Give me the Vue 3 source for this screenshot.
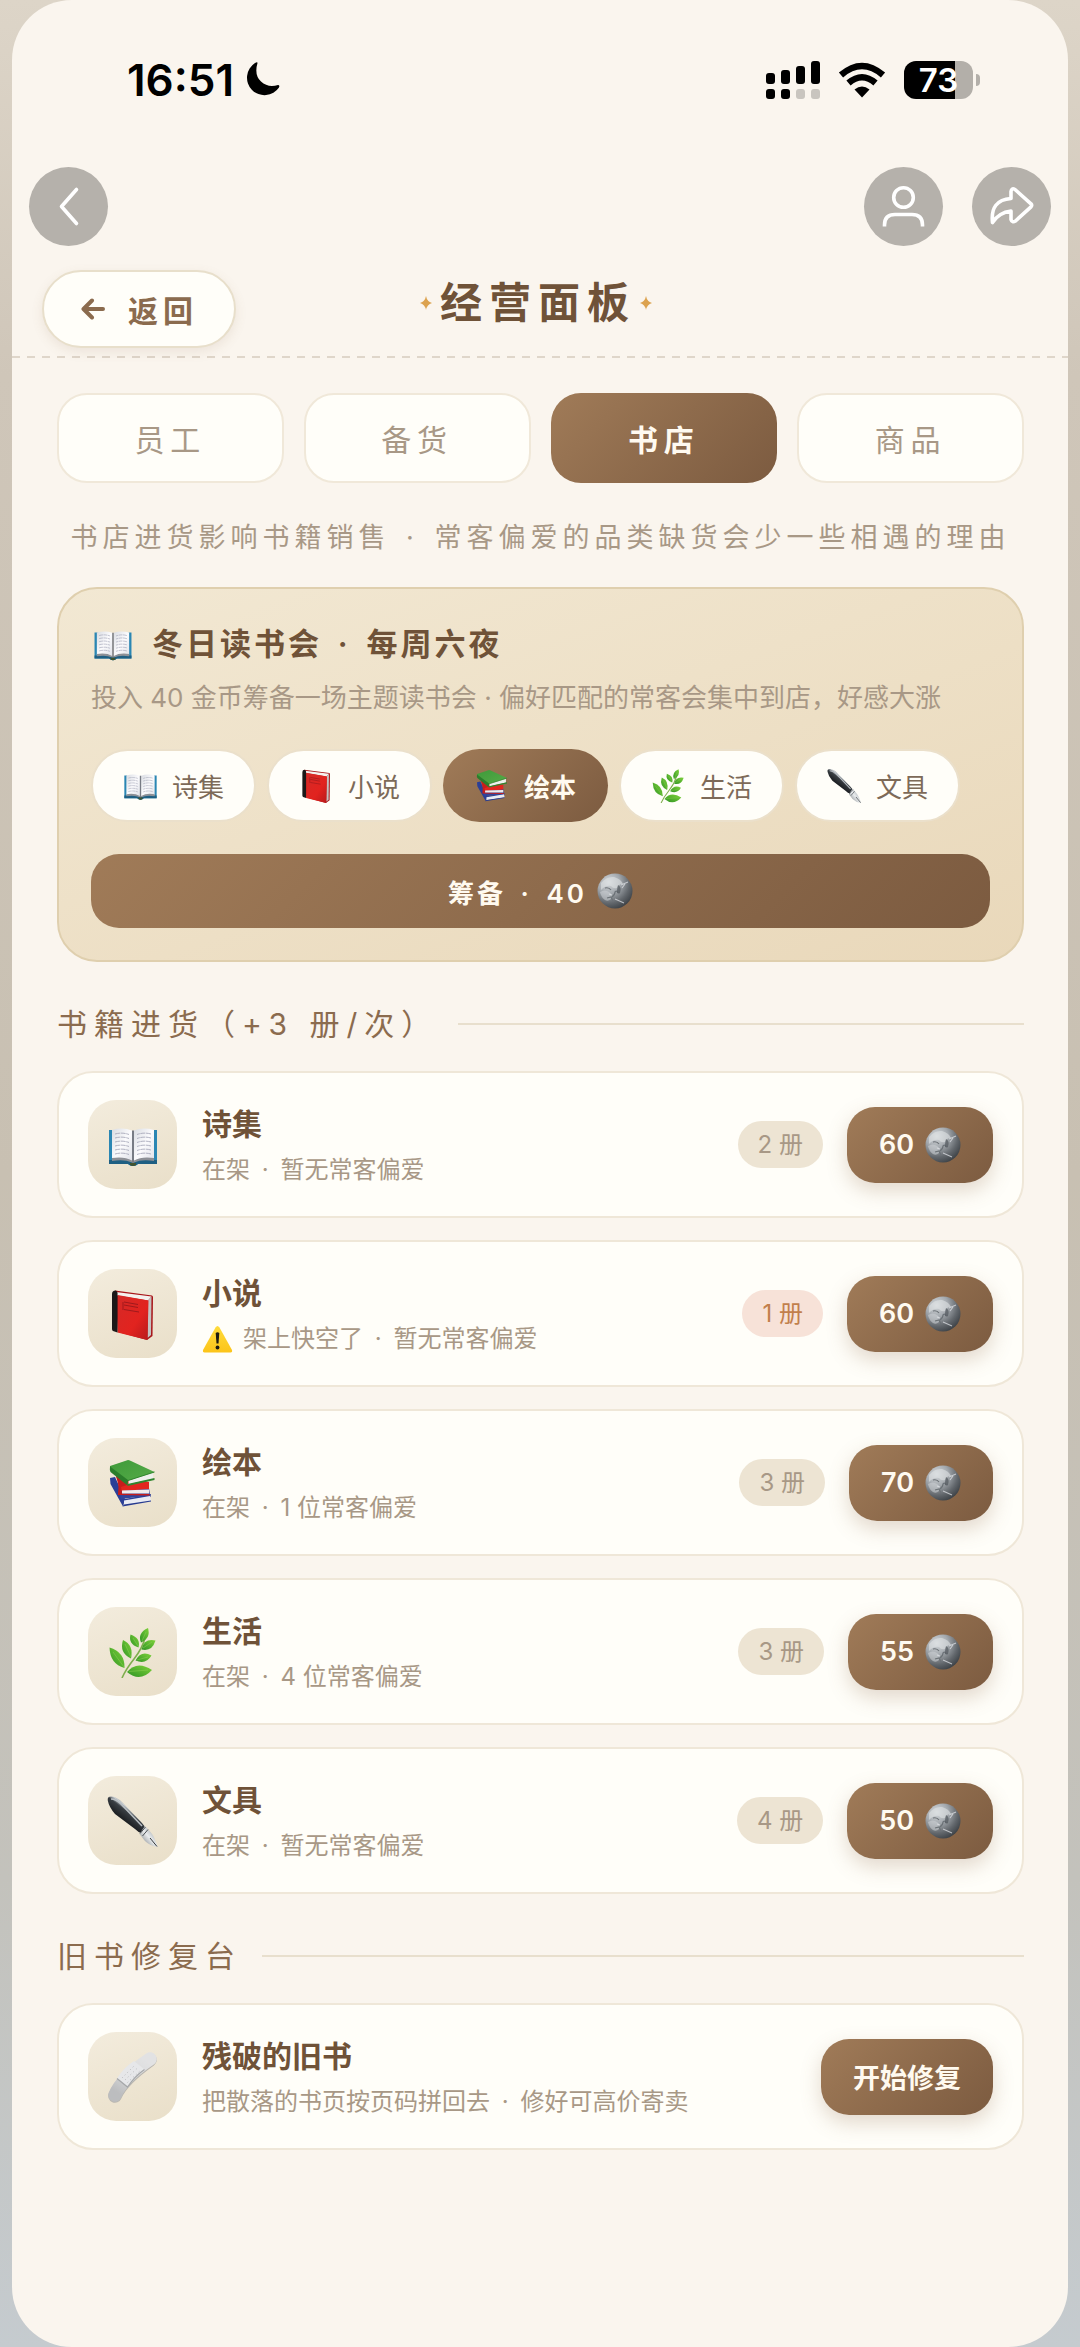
<template>
  <div class="stage">
    <!-- icon sprite -->
    <svg class="sprite" aria-hidden="true">
      <defs>
        <linearGradient id="pageGrad" x1="0" y1="0" x2="1" y2="1">
          <stop offset="0" stop-color="#d9dce2" />
          <stop offset="0.5" stop-color="#fbfbfd" />
          <stop offset="1" stop-color="#dfe1e8" />
        </linearGradient>
        <linearGradient id="redGrad" x1="0" y1="0" x2="1" y2="1">
          <stop offset="0" stop-color="#d42a27" />
          <stop offset="0.6" stop-color="#e2231f" />
          <stop offset="1" stop-color="#b81a1c" />
        </linearGradient>
        <linearGradient id="greenGrad" x1="0" y1="0" x2="1" y2="1">
          <stop offset="0" stop-color="#3f9a3a" />
          <stop offset="1" stop-color="#55ab48" />
        </linearGradient>
        <linearGradient id="leafGrad" x1="1" y1="0" x2="0" y2="1">
          <stop offset="0" stop-color="#7ed23a" />
          <stop offset="1" stop-color="#2f9324" />
        </linearGradient>
        <linearGradient id="penGrad" x1="0.7" y1="0.2" x2="0.3" y2="0.7">
          <stop offset="0" stop-color="#4c5258" />
          <stop offset="0.3" stop-color="#c9ced2" />
          <stop offset="0.45" stop-color="#3a3f44" />
          <stop offset="1" stop-color="#0d0f12" />
        </linearGradient>
        <linearGradient id="nibGrad" x1="1" y1="0" x2="0" y2="1">
          <stop offset="0" stop-color="#7e8488" />
          <stop offset="0.5" stop-color="#e9ecee" />
          <stop offset="1" stop-color="#5d6266" />
        </linearGradient>
        <linearGradient id="bandGrad" x1="0.8" y1="0" x2="0.2" y2="1">
          <stop offset="0" stop-color="#e2e2e3" />
          <stop offset="0.5" stop-color="#d8d9da" />
          <stop offset="1" stop-color="#bcbdbf" />
        </linearGradient>
        <linearGradient id="warnGrad" x1="0" y1="0" x2="0" y2="1">
          <stop offset="0" stop-color="#ffdc3c" />
          <stop offset="1" stop-color="#fcc419" />
        </linearGradient>
        <radialGradient id="moonGrad" cx="0.32" cy="0.25" r="0.8">
          <stop offset="0" stop-color="#d5d9dc" />
          <stop offset="0.4" stop-color="#a4a9ae" />
          <stop offset="0.75" stop-color="#62676c" />
          <stop offset="1" stop-color="#3e4348" />
        </radialGradient>
      </defs>

      <symbol id="open-book" viewBox="0 0 52 52">
        <path d="M2 11H6V40H22L26 43L30 40H46V11H50V45H31Q29 47 26 47Q23 47 21 45H2Z" fill="#2a86b3" />
        <path d="M2 41H22L26 44L30 41H50V45H31Q29 47 26 47Q23 47 21 45H2Z" fill="#1e5f83" />
        <path d="M5 11Q16 8 25 11.5V43Q17 38 5 40.5Z" fill="url(#pageGrad)" />
        <path d="M47 11Q36 8 27 11.5V43Q35 38 47 40.5Z" fill="url(#pageGrad)" />
        <path d="M5 39Q17 37 25 41.5V43.5Q17 40 5 42ZM47 39Q35 37 27 41.5V43.5Q35 40 47 42Z" fill="#8d9096" />
        <path d="M25 11.5H27V44H25Z" fill="#777b84" />
        <path
          d="M8 15Q15 13 22 15.500M8 19Q15 17 22 19.500M8 23Q15 21 22 23.500M8 27Q15 25 22 27.500M8 31Q15 29 22 31.500M8 35Q15 33 22 35.500M44 15Q37 13 30 15.500M44 19Q37 17 30 19.500M44 23Q37 21 30 23.500M44 27Q37 25 30 27.500M44 31Q37 29 30 31.500M44 35Q37 33 30 35.500"
          fill="none"
          stroke="#9ea0b3"
          stroke-width="0.8"
          stroke-dasharray="5 0.7"
        />
        <path d="M23 44H29V46Q26 48 23 46Z" fill="#41532f" />
      </symbol>

      <symbol id="red-book" viewBox="0 0 52 52">
        <path d="M8 2.500L45 7.500Q46 8 46 9L45.500 48L40 52L11 44Z" fill="#a81519" />
        <path d="M9 4L44.500 8.500L41 12.500L10 7.500Z" fill="#f4f1ee" />
        <path d="M41 12.500L44.500 8.500L44 47L40.500 50Z" fill="#c4c1c0" />
        <path d="M10.500 7L41.500 12.500L40.500 52L10.500 44.500Z" fill="url(#redGrad)" />
        <path d="M5 6Q5 2.500 8.500 2.500Q11 3 10.500 7V44.500L6 43Q5 42.500 5 41Z" fill="#1b1818" />
        <path d="M17 14L31 16.500M17 17L31 19.500M17 21.500L32 24M16 14V22" fill="none" stroke="#a0191c" stroke-width="1" />
      </symbol>

      <symbol id="book-stack" viewBox="0 0 52 52">
        <path d="M3 21L8 20L18 42L44 37L43.500 40L17 46L16 49.500L3.500 27Z" fill="#2b3f97" />
        <path d="M17 43.500L43 39L44 44L17 48Z" fill="#e9ebf3" />
        <path d="M15.500 49.500L44 44.500V43.500L17 47.500Z" fill="#263a90" />
        <path d="M12 34L42 31L43 38.500L14 42Z" fill="#30449c" />
        <path d="M9 19L42 25L42 32L14 34Z" fill="#e2261f" />
        <path d="M9 19Q11 24 11.500 30L11 38L42.500 38.500V37L15 36.500L14 30L20 28Z" fill="#c71d1b" />
        <path d="M15 33.500L42 32.500V36.500L15 36.500Z" fill="#f0ecec" />
        <path d="M3 9L21 3Q22 3 24 4L47.500 15L21 24L3 11Z" fill="url(#greenGrad)" />
        <path d="M3 9.500L21 23L20.500 28.500L3.500 15Q2.500 13 3 9.500Z" fill="#2b7d2b" />
        <path d="M21.500 23.500L46 16V21.500L21.500 27.500Z" fill="#edf0ec" />
        <path d="M20.500 27L47.500 21V23L20.500 29Z" fill="#2f852e" />
        <path d="M47.500 15L21 23.500" stroke="#2f852e" stroke-width="1" />
      </symbol>

      <symbol id="herb" viewBox="0 0 52 52">
        <path d="M15 52Q19 43 27 33T38 12" fill="none" stroke="#7fae4d" stroke-width="1.6" />
        <g fill="url(#leafGrad)">
          <path d="M17.500 42Q3 38 2.500 21.500Q18 26 17.500 42Z" />
          <path d="M24 32.500Q12 27 16 14Q27 19 24 32.500Z" />
          <path d="M31.500 21.500Q21 18 23.500 8.500Q34 12 31.500 21.500Z" />
          <path d="M34 16.500Q30 7 41 2Q44 12 34 16.500Z" />
          <path d="M34.500 23.500Q37 12 48.500 14.500Q45 26 34.500 23.500Z" />
          <path d="M28.500 34.500Q34 24 44.500 29.500Q39 39 28.500 34.500Z" />
          <path d="M20 46Q30 34 45 44Q33 57 20 46Z" />
        </g>
        <path d="M17 41L6 26M24 31L18 18M31 20L26 12M35 15L39 6M36 22L45 16M30 34L41 31M22 45.500L41 44" stroke="#8fd055" stroke-width="0.5" />
      </symbol>

      <symbol id="pen" viewBox="0 0 52 52">
        <path d="M0.800 5.500Q0 1 5 1.500Q10 2 16 8L35 28Q38 31 38.500 34L34 38Q31 37 28 34L8 19Q2 12 0.800 5.500Z" fill="url(#penGrad)" />
        <path d="M4 4Q9 4 14 9L35 31" fill="none" stroke="#b9bfc4" stroke-width="1.500" />
        <path d="M38 31L43.500 37Q48 42 50.500 52Q43 51 38 46L32.500 39Z" fill="url(#nibGrad)" />
        <path d="M38.500 32L33 38.500M41 34.500L35.500 41" stroke="#4a4f53" stroke-width="1" />
        <path d="M43 43L50 51.500" stroke="#34383b" stroke-width="1" />
      </symbol>

      <symbol id="bandage" viewBox="0 0 52 52">
        <path d="M8 45Q15 29 43 9" fill="none" stroke="#b9b6b0" stroke-width="13.500" stroke-linecap="round" />
        <path d="M8 44Q15 27 43 8" fill="none" stroke="url(#bandGrad)" stroke-width="13.500" stroke-linecap="round" />
        <path d="M10 27.500Q17 16 27 10L37.500 18.500Q28 25 20.500 36Z" fill="#e6e7e9" />
        <path d="M10 27.500L20.500 36Q28 25 37.500 18.500" fill="none" stroke="#a5a7a9" stroke-width="1.200" />
        <path d="M15 27L28 14M18 29L31 16.500M20.500 31.500L34 19" stroke="#b9bbbd" stroke-width="1" stroke-dasharray="1 2.800" />
      </symbol>

      <symbol id="moon-coin" viewBox="0 0 36 36">
        <circle cx="18" cy="18" r="17.500" fill="url(#moonGrad)" />
        <path d="M4 10Q10 3 17 4Q24 6 26 11Q21 11 20 15Q16 16 14 13Q9 12 4 17Z" fill="#dfe2e4" opacity="0.6" />
        <path d="M3 19Q8 16 12 19Q16 21 14 26Q11 29 8 27Q4 24 3 19Z" fill="#ced2d5" opacity="0.55" />
        <path d="M8 15Q12 14 14 17M15 24Q18 22 18 19Q20 17 21 20M10 25L14 24L16 28" stroke="#6c7277" stroke-width="1.200" fill="none" />
        <path d="M24 12L31 9M25 15L28 11M18 26L27 30M12 21L15 22" stroke="#dfe2e5" stroke-width="1.100" fill="none" opacity="0.75" />
        <path d="M21 12Q25 14 23 20Q20 22 20 17Z" fill="#50565b" opacity="0.7" />
      </symbol>

      <symbol id="warning" viewBox="0 0 30 28">
        <path d="M15 1Q16 1 17 2.500L29.500 25Q30 27.500 28 27.500H2Q0 27.500 0.500 25L13 2.500Q14 1 15 1Z" fill="url(#warnGrad)" />
        <path d="M13.200 8Q15 6.500 16.800 8L16 18.500H14Z" fill="#1c1a12" />
        <circle cx="15" cy="22.500" r="1.900" fill="#1c1a12" />
      </symbol>

      <symbol id="spark" viewBox="0 0 12 14">
        <path d="M6 0Q7 5.500 12 7Q7 8.500 6 14Q5 8.500 0 7Q5 5.500 6 0Z" fill="#dca24e" />
      </symbol>
    </svg>

    <main class="panel">
      <div class="status-bar">
        <span class="clock">16:51</span>
        <svg class="dnd" viewBox="0 0 36 36" aria-hidden="true">
          <path d="M13.500 1Q10 13 17 19.500T34 23Q36 23 35 25.500A17.500 17.500 0 1 1 11 1Q13.500 -0.500 13.500 1Z" />
        </svg>
        <div class="status-right">
          <svg class="signal" viewBox="0 0 54 38" aria-hidden="true">
            <rect x="0" y="12" width="9" height="11" rx="3" />
            <rect x="15" y="9" width="9" height="14" rx="3" />
            <rect x="30" y="5" width="9" height="18" rx="3" />
            <rect x="45" y="0" width="9" height="23" rx="3" />
            <rect x="0" y="28" width="9" height="10" rx="3" />
            <rect x="15" y="28" width="9" height="10" rx="3" />
            <rect x="30" y="28" width="9" height="10" rx="3" fill="#c9c5bf" />
            <rect x="45" y="28" width="9" height="10" rx="3" fill="#c9c5bf" />
          </svg>
          <svg class="wifi" viewBox="0 0 48 36" aria-hidden="true">
            <path d="M3 13Q24 -5 45 13" fill="none" stroke="#000" stroke-width="6.500" />
            <path d="M10.500 21Q24 9.500 37.500 21" fill="none" stroke="#000" stroke-width="6.500" />
            <path d="M16.500 27.500Q24 21.500 31.500 27.500L24 35.500Z" />
          </svg>
          <div class="battery"><span>73</span></div>
        </div>
      </div>

      <nav class="nav-row">
        <button class="round-btn" type="button" aria-label="后退">
          <svg viewBox="0 0 79 79"><path d="M47.500 22.500L32.500 39.500L47.500 56.500" /></svg>
        </button>
        <div class="nav-right">
          <button class="round-btn" type="button" aria-label="我的">
            <svg viewBox="0 0 79 79">
              <circle cx="39.500" cy="30.500" r="9.800" />
              <path d="M20.500 59.500V58Q20.500 47.500 31 47.500H48Q58.500 47.500 58.500 58V59.500" stroke-linecap="butt" />
            </svg>
          </button>
          <button class="round-btn" type="button" aria-label="分享">
            <svg viewBox="0 0 79 79">
              <path d="M39 31.500V24.500Q39.500 20.500 43 22.500L59 36.800Q60.300 38.300 59 39.800L43.500 54Q40 56 39 52.500V44Q27 45.500 20.500 55.500Q18 33 39 31.500Z" />
            </svg>
          </button>
        </div>
      </nav>

      <header class="header">
        <button class="back-btn" type="button">
          <svg viewBox="0 0 24 22" aria-hidden="true"><path d="M22 11H3M11 2.500L2.500 11L11 19.500" /></svg>
          <span>返回</span>
        </button>
        <h1 class="title">
          <svg class="spark" aria-hidden="true"><use href="#spark" /></svg>
          <span>经营面板</span>
          <svg class="spark" aria-hidden="true"><use href="#spark" /></svg>
        </h1>
      </header>

      <div class="content">
        <div class="tabs">
          <button
            v-for="tab in tabs"
            :key="tab"
            type="button"
            class="tab"
            :class="{ active: tab === activeTab }"
            @click="activeTab = tab"
          >
            {{ tab }}
          </button>
        </div>

        <p class="hint">书店进货影响书籍销售 <i class="dot">·</i> 常客偏爱的品类缺货会少一些相遇的理由</p>

        <section class="club">
          <h2 class="club-title">
            <svg class="club-icon" aria-hidden="true"><use href="#open-book" /></svg>
            <span>冬日读书会 <i class="dot">·</i> 每周六夜</span>
          </h2>
          <p class="club-desc">投入 40 金币筹备一场主题读书会 · 偏好匹配的常客会集中到店，好感大涨</p>
          <div class="chips">
            <button
              v-for="book in books"
              :key="book.name"
              type="button"
              class="chip"
              :class="{ active: book.name === theme }"
              @click="theme = book.name"
            >
              <svg class="chip-icon" aria-hidden="true"><use :href="book.icon" /></svg>
              <span>{{ book.name }}</span>
            </button>
          </div>
          <button class="prepare" type="button">
            <span>筹备 <i class="dot">·</i> 40</span>
            <svg class="coin" aria-hidden="true"><use href="#moon-coin" /></svg>
          </button>
        </section>

        <h2 class="section-title">书籍进货（+3 册/次）</h2>
        <ul class="list">
          <li v-for="book in books" :key="book.name" class="card">
            <div class="tile">
              <svg aria-hidden="true"><use :href="book.icon" /></svg>
            </div>
            <div class="info">
              <h3>{{ book.name }}</h3>
              <p>
                <svg v-if="book.low" class="warn" aria-hidden="true"><use href="#warning" /></svg>
                <span>{{ book.shelf }} <i class="dot">·</i> {{ book.fans }}</span>
              </p>
            </div>
            <span class="stock" :class="{ low: book.low }">{{ book.stock }} 册</span>
            <button class="buy" type="button">
              <span>{{ book.price }}</span>
              <svg class="coin" aria-hidden="true"><use href="#moon-coin" /></svg>
            </button>
          </li>
        </ul>

        <h2 class="section-title">旧书修复台</h2>
        <div class="card">
          <div class="tile">
            <svg aria-hidden="true"><use href="#bandage" /></svg>
          </div>
          <div class="info">
            <h3>残破的旧书</h3>
            <p><span>把散落的书页按页码拼回去 <i class="dot">·</i> 修好可高价寄卖</span></p>
          </div>
          <button class="buy" type="button">开始修复</button>
        </div>
      </div>
    </main>
  </div>
</template>

<script setup>
import { ref } from "vue";

const tabs = ["员工", "备货", "书店", "商品"];
const activeTab = ref("书店");
const theme = ref("绘本");

const books = ref([
  { name: "诗集", icon: "#open-book", shelf: "在架", fans: "暂无常客偏爱", stock: 2, price: 60, low: false },
  { name: "小说", icon: "#red-book", shelf: "架上快空了", fans: "暂无常客偏爱", stock: 1, price: 60, low: true },
  { name: "绘本", icon: "#book-stack", shelf: "在架", fans: "1 位常客偏爱", stock: 3, price: 70, low: false },
  { name: "生活", icon: "#herb", shelf: "在架", fans: "4 位常客偏爱", stock: 3, price: 55, low: false },
  { name: "文具", icon: "#pen", shelf: "在架", fans: "暂无常客偏爱", stock: 4, price: 50, low: false },
]);
</script>

<style>
body {
  margin: 0;
}
</style>

<style scoped>
.stage {
  min-height: 100vh;
  padding: 0 12px;
  box-sizing: border-box;
  display: flex;
  background: linear-gradient(180deg, #ddd5c8 0%, #cfc6b9 16%, #c8c0b2 50%, #c3c2bc 80%, #c5cbcf 100%);
  font-family: Inter, "Noto Sans CJK SC", sans-serif;
  color: #6f5238;
}

.sprite {
  position: absolute;
  width: 0;
  height: 0;
}

button {
  font-family: inherit;
  border: none;
  padding: 0;
  margin: 0;
  cursor: pointer;
}

h1,
h2,
h3,
p,
ul {
  margin: 0;
  padding: 0;
}

.dot {
  margin: 0 5px;
  font-style: normal;
}

.panel {
  flex: 1;
  min-width: 0;
  background: #faf5ee;
  border-radius: 60px;
}

/* status bar */
.status-bar {
  display: flex;
  align-items: center;
  height: 48px;
  padding: 56px 88px 0 115px;
}

.clock {
  font-size: 44px;
  font-weight: 600;
  line-height: 48px;
  color: #000;
}

.dnd {
  width: 36px;
  height: 36px;
  margin-left: 10px;
}

.status-right {
  display: flex;
  align-items: center;
  gap: 18px;
  margin-left: auto;
}

.signal {
  width: 54px;
  height: 38px;
}

.wifi {
  width: 48px;
  height: 36px;
}

.battery {
  position: relative;
  width: 69px;
  height: 38px;
  margin-right: 7px;
  border-radius: 12px;
  background: linear-gradient(90deg, #000 74%, #b3afa9 74%);
  color: #fff;
  font-size: 33px;
  font-weight: 600;
  line-height: 38px;
  text-align: center;
}

.battery::after {
  content: "";
  position: absolute;
  right: -7px;
  top: 13px;
  width: 4px;
  height: 12px;
  border-radius: 0 6px 6px 0;
  background: #b3afa9;
}

/* floating round buttons */
.nav-row {
  display: flex;
  justify-content: space-between;
  padding: 63px 17px 0;
}

.nav-right {
  display: flex;
  gap: 29px;
}

.round-btn {
  width: 79px;
  height: 79px;
  border-radius: 50%;
  background: #b5b1ab;
}

.round-btn svg {
  display: block;
  width: 79px;
  height: 79px;
  fill: none;
  stroke: #fff;
  stroke-width: 3.6;
  stroke-linecap: round;
  stroke-linejoin: round;
}

.header {
  display: grid;
  grid-template-columns: 1fr auto 1fr;
  align-items: start;
  padding: 24px 30px 10px;
  background: repeating-linear-gradient(90deg, #dfd6ca 0 8px, transparent 8px 15px) bottom / 100% 2px no-repeat;
}

.back-btn {
  justify-self: start;
  display: flex;
  align-items: center;
  gap: 23px;
  height: 78px;
  padding: 0 36px 0 37px;
  border: 2px solid #e8dfcb;
  border-radius: 39px;
  background: #fffef9;
  box-shadow: 0 4px 12px rgba(139, 105, 70, 0.12);
  color: #8b6b4e;
  font-size: 30px;
  font-weight: 600;
  letter-spacing: 5px;
}

.back-btn svg {
  width: 24px;
  height: 22px;
  fill: none;
  stroke: #8b6b4e;
  stroke-width: 4;
  stroke-linecap: round;
  stroke-linejoin: round;
}

.title {
  display: flex;
  align-items: center;
  gap: 4px;
  padding-right: 8px;
  font-size: 42px;
  font-weight: 600;
  line-height: 66px;
  letter-spacing: 7px;
}

.spark {
  width: 12px;
  height: 14px;
}

.spark:first-child {
  margin-right: 4px;
}

.content {
  padding: 35px 44px 120px 45px;
}

.tabs {
  display: grid;
  grid-template-columns: repeat(4, 1fr);
  gap: 20px;
}

.tab {
  height: 90px;
  border: 2px solid #f0e8d9;
  border-radius: 30px;
  background: #fffef9;
  color: #a89886;
  font-size: 30px;
  letter-spacing: 6px;
}

.tab.active,
.chip.active {
  border: none;
  background: linear-gradient(135deg, #a07b58, #7c5b40);
  color: #fffaf0;
  font-weight: 600;
}

.hint {
  margin: 35px 0 29px;
  font-size: 27px;
  line-height: 40px;
  letter-spacing: 5px;
  text-align: center;
  white-space: nowrap;
  color: #a89886;
}

.hint .dot {
  margin: 0 3px;
}

/* reading club */
.club {
  padding: 35px 32px 32px;
  border: 2px solid #dfcfae;
  border-radius: 40px;
  background: linear-gradient(160deg, #f2e8d3, #e9d8ba);
}

.club-title {
  display: flex;
  align-items: center;
  gap: 17px;
  font-size: 31px;
  font-weight: 600;
  line-height: 40px;
  letter-spacing: 3px;
}

.club-icon {
  width: 44px;
  height: 40px;
}

.club-desc {
  margin-top: 16px;
  font-size: 26px;
  line-height: 36px;
  color: #a89886;
  white-space: nowrap;
}

.chips {
  display: flex;
  gap: 11px;
  margin-top: 33px;
}

.chip {
  display: flex;
  align-items: center;
  justify-content: center;
  gap: 14px;
  width: 165px;
  height: 73px;
  border: 2px solid #ebe0cb;
  border-radius: 37px;
  background: #fffef9;
  color: #7d6a58;
  font-size: 26px;
}

.chip-icon {
  width: 35px;
  height: 35px;
}

.prepare {
  display: flex;
  align-items: center;
  justify-content: center;
  gap: 10px;
  width: 100%;
  height: 74px;
  margin-top: 32px;
  border-radius: 28px;
  background: linear-gradient(135deg, #a07b58, #7c5b40);
  color: #fffaf0;
  font-size: 26px;
  font-weight: 600;
  letter-spacing: 3px;
}

.coin {
  width: 36px;
  height: 36px;
}

.section-title {
  display: flex;
  align-items: center;
  gap: 20px;
  margin: 44px 0 29px;
  font-size: 30px;
  font-weight: 400;
  line-height: 36px;
  letter-spacing: 7px;
  color: #8b6b4e;
}

.section-title::after {
  content: "";
  flex: 1;
  height: 2px;
  background: #e8dfcd;
}

.list {
  display: flex;
  flex-direction: column;
  gap: 22px;
  list-style: none;
}

.card {
  display: flex;
  align-items: center;
  padding: 27px 29px;
  border: 2px solid #efe7d8;
  border-radius: 36px;
  background: #fffef9;
}

.tile {
  display: flex;
  align-items: center;
  justify-content: center;
  width: 89px;
  height: 89px;
  border-radius: 28px;
  background: linear-gradient(160deg, #f3ecdd, #e9dfc9);
}

.tile svg {
  width: 52px;
  height: 52px;
}

.info {
  flex: 1;
  padding-top: 4px;
  margin-left: 25px;
}

.info h3 {
  font-size: 30px;
  font-weight: 600;
  line-height: 38px;
}

.info p {
  display: flex;
  align-items: center;
  gap: 10px;
  margin-top: 9px;
  font-size: 24px;
  line-height: 36px;
  color: #a89886;
}

.warn {
  width: 31px;
  height: 28px;
}

.stock {
  padding: 0 20px;
  border-radius: 24px;
  background: #ede4d3;
  color: #a89886;
  font-size: 24px;
  line-height: 47px;
}

.stock.low {
  background: #f7e2d8;
  color: #c27f4c;
}

.buy {
  display: flex;
  align-items: center;
  gap: 11px;
  height: 76px;
  margin-left: 24px;
  padding: 0 32px;
  border-radius: 28px;
  background: linear-gradient(135deg, #a07b58, #7c5b40);
  box-shadow: 0 8px 20px rgba(139, 105, 70, 0.25);
  color: #fffaf0;
  font-size: 27px;
  font-weight: 600;
}
</style>
